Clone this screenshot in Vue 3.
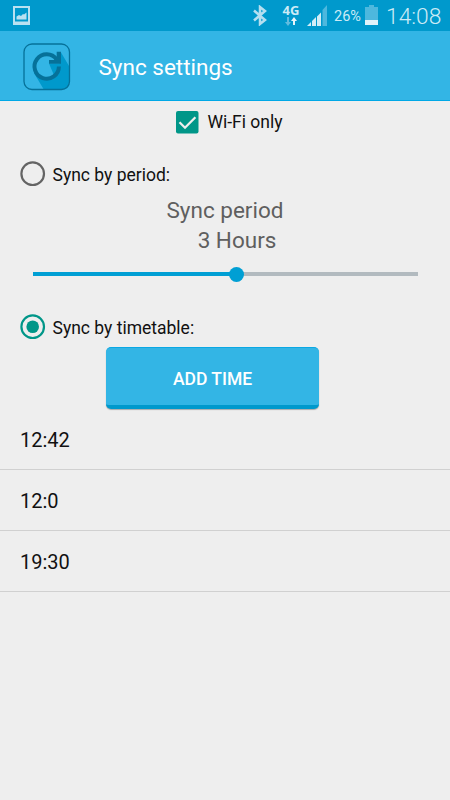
<script setup>
import { ref } from 'vue'

const wifiOnly = ref(true)
const mode = ref('timetable')
const progress = ref(53.1)
const times = ref(['12:42', '12:0', '19:30'])
</script>

<template>
  <div class="screen">
    <div class="status">
      <svg class="picture" width="18" height="19" viewBox="0 0 18 19">
        <path fill="#b9e1f1" fill-rule="evenodd" d="M1 0h17v19H1zM3 2v13.500h13V2z" />
        <path fill="#b9e1f1" d="M4.500 13.500v-3l2.500-1.500 2 1 2-2 1 .5 2.500-2v7z" />
      </svg>
      <svg class="bluetooth" width="14" height="21" viewBox="0 0 14 21">
        <path fill="none" stroke="#b5dff0" stroke-width="2.500" d="M1 5.500l11 9.500-5 4V2l5 4L1 15.500" />
      </svg>
      <div class="network">
        <span class="network-label">4G</span>
        <svg width="12" height="9" viewBox="0 0 12 9">
          <path fill="#62bcdf" d="M2 0h2v5h2L3 9 0 5h2z" />
          <path fill="#e5f4fa" d="M9 0l3 4h-2v4H8V4H6z" />
        </svg>
      </div>
      <svg class="signal" width="20" height="21" viewBox="0 0 20 21">
        <path fill="#d3edf7" d="M0 21l4-4v4zM5 16l4-4v9H5zM10 11.500l4-4V21h-4z" />
        <path fill="#4db8de" d="M15.500 5L20 0v21h-4.500z" />
      </svg>
      <span class="percent">26%</span>
      <svg class="battery" width="13" height="20" viewBox="0 0 13 20">
        <path fill="#4db8de" d="M4 0h5v2h4v13H0V2h4z" />
        <path fill="#e0f2f9" d="M0 15h13v5H0z" />
      </svg>
      <span class="clock">14:08</span>
    </div>

    <header class="bar">
      <svg class="logo" width="48" height="48" viewBox="0 0 48 48">
        <path fill="#0099cc" d="M38 9.500L46 23v18q0 5-5 5H20.500L11 30l25-6z" />
        <circle cx="23.700" cy="23.500" r="12" fill="#33b5e5" />
        <path fill="#0099cc" d="M26 20.500h12v4l-2 6-4.500 3z" />
        <path fill="none" stroke="#067199" stroke-width="4" d="M33.700 16.500A12.200 12.200 0 1 0 35.900 23.500" />
        <path fill="#067199" d="M33.700 8.800H38v12H26v-3.800h5l2.700-2.700z" />
        <rect x="1" y="1" width="45.500" height="45.500" rx="8" fill="none" stroke="#067199" stroke-width="1.300" />
      </svg>
      <h1 class="title">Sync settings</h1>
    </header>

    <main class="content">
      <label class="wifi" @click="wifiOnly = !wifiOnly">
        <svg width="23" height="23" viewBox="0 0 23 23">
          <rect width="22.500" height="22.500" rx="2" fill="#009688" />
          <path v-if="wifiOnly" fill="none" stroke="#eee" stroke-width="2.300" d="M3.500 11.300L9 16.700 19.400 6.200" />
        </svg>
        <span>Wi-Fi only</span>
      </label>

      <div class="option" @click="mode = 'period'">
        <svg width="26" height="26" viewBox="0 0 26 26">
          <circle cx="12.700" cy="12.700" r="11.300" fill="none" stroke="#646464" stroke-width="2.200" />
        </svg>
        <span>Sync by period:</span>
      </div>

      <div class="period">
        <div>Sync period</div>
        <div class="value">3 Hours</div>
      </div>
      <div class="slider">
        <div class="fill" :style="{ width: progress + '%' }"><i class="thumb"></i></div>
      </div>

      <div class="option timetable" @click="mode = 'timetable'">
        <svg width="26" height="26" viewBox="0 0 26 26">
          <circle cx="12.700" cy="12.700" r="11.300" fill="none" stroke="#009688" stroke-width="2.200" />
          <circle cx="12.700" cy="12.700" r="6.300" fill="#009688" />
        </svg>
        <span>Sync by timetable:</span>
      </div>

      <button class="add">ADD TIME</button>

      <ul class="times">
        <li v-for="time in times" :key="time">{{ time }}</li>
      </ul>
    </main>
  </div>
</template>

<style>
body { margin: 0; background: #eee; }
</style>

<style scoped>
.screen {
  width: 450px;
  height: 800px;
  overflow: hidden;
  background: #eee;
  color: #111;
  font-family: Roboto, sans-serif;
}
.screen svg { display: block; flex: none; }
.status {
  display: flex;
  align-items: flex-start;
  box-sizing: border-box;
  height: 31px;
  background: #0099cc;
  color: #ccebf6;
  white-space: nowrap;
}
.picture { margin: 6px 0 0 12px; }
.bluetooth { margin: 5px 0 0 223px; }
.network {
  display: flex;
  flex-direction: column;
  align-items: center;
  width: 18px;
  margin: 4px 0 0 15px;
}
.network-label { font: 700 13px/13px "Open Sans", sans-serif; }
.signal { margin: 5px 0 0 7px; }
.percent { width: 28px; margin: 8px 0 0 7px; font-size: 14.500px; line-height: 18px; }
.battery { margin: 5px 0 0 3px; }
.clock { margin: 4px 0 0 8px; font-size: 22.800px; line-height: 26px; font-weight: 300; }
.bar {
  display: flex;
  align-items: center;
  box-sizing: border-box;
  height: 70px;
  padding: 2px 0 0 23px;
  border-bottom: 1px solid #00a8e6;
  background: #33b5e5;
}
.title { margin: 0 0 0 27.500px; color: #fff; font-size: 22.500px; line-height: 28px; font-weight: 400; }
.content { display: flex; flex-direction: column; }
.wifi {
  display: flex;
  align-items: center;
  align-self: center;
  gap: 8px;
  height: 42px;
  margin-left: 9px;
  font-size: 17.500px;
}
.option {
  display: flex;
  align-items: center;
  gap: 6.500px;
  height: 26px;
  margin: 18px 0 0 20px;
  font-size: 17.500px;
}
.option span { padding-top: 2px; }
.period {
  margin-top: 8px;
  color: #5f5f5f;
  font-size: 22.500px;
  line-height: 30px;
  text-align: center;
}
.value { padding-left: 24px; }
.slider { height: 4px; margin: 17px 32.500px 0; background: #b2babf; }
.fill { display: flex; align-items: center; justify-content: flex-end; height: 4px; background: #009fd4; }
.thumb { flex: none; width: 15px; height: 15px; margin-right: -7.500px; border-radius: 50%; background: #009fd4; }
.timetable { margin-top: 38px; }
.add {
  box-sizing: border-box;
  align-self: center;
  width: 213px;
  height: 62px;
  margin: 7px 0 0 -25px;
  padding: 4px 0 0;
  border: 0;
  border-top: 1px solid #0aa8e4;
  border-bottom: 4px solid #0099cc;
  border-radius: 5px;
  background: #33b5e5;
  box-shadow: 0 1px 1px #aaa;
  color: #fff;
  font: 500 17.500px Roboto, sans-serif;
}
.times { margin: 0; padding: 0; list-style: none; }
.times li {
  box-sizing: border-box;
  height: 61px;
  padding-left: 20px;
  border-bottom: 1px solid #d0d0d0;
  font-size: 20px;
  line-height: 63px;
}
</style>
